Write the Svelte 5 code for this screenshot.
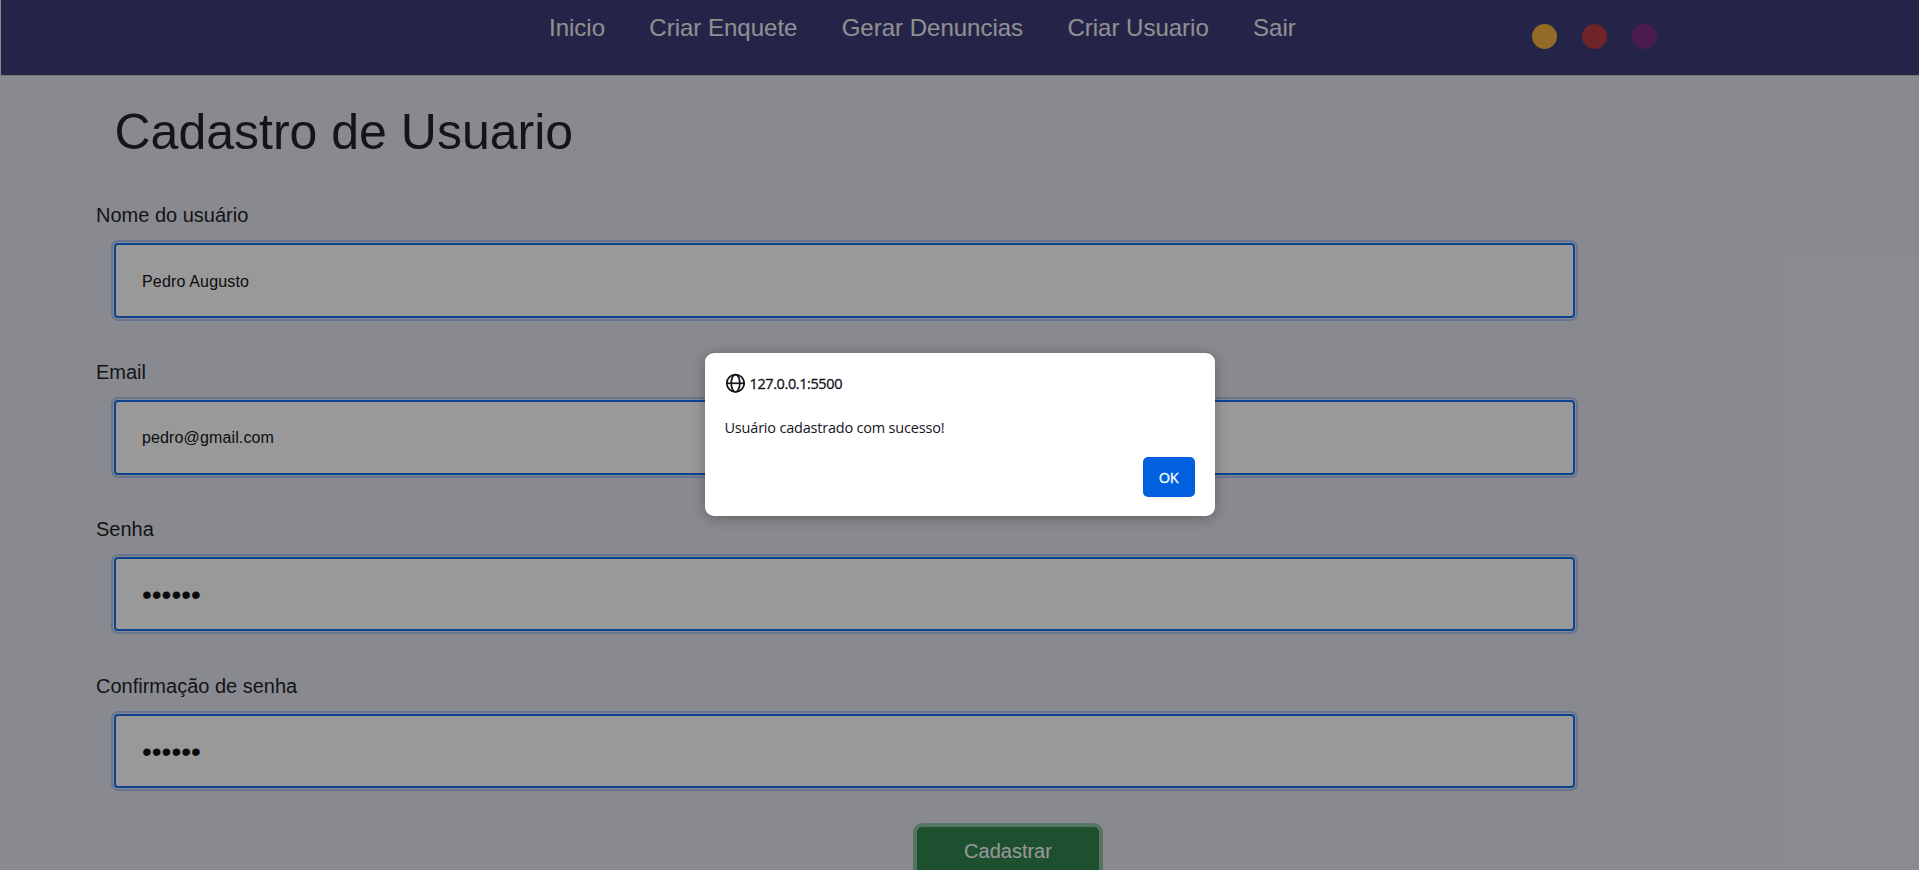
<script>
  const links = ['Inicio', 'Criar Enquete', 'Gerar Denuncias', 'Criar Usuario', 'Sair'];
  const themes = ['amber', 'red', 'purple'];
  const fields = [
    { label: 'Nome do usuário', value: 'Pedro Augusto', kind: 'name' },
    { label: 'Email', value: 'pedro@gmail.com', kind: 'email' },
    { label: 'Senha', value: '••••••', kind: 'secret' },
    { label: 'Confirmação de senha', value: '••••••', kind: 'secret' }
  ];
</script>

<div class="page">
  <header>
    <nav>
      {#each links as link}
        <span>{link}</span>
      {/each}
    </nav>
    <div class="themes">
      {#each themes as theme}
        <i class={theme}></i>
      {/each}
    </div>
  </header>

  <main>
    <h1>Cadastro de Usuario</h1>
    {#each fields as field}
      <div class="field">
        <div class="label">{field.label}</div>
        <div class="box {field.kind}"><span>{field.value}</span></div>
      </div>
    {/each}
    <button class="submit">Cadastrar</button>
  </main>

  <div class="overlay">
    <section class="dialog">
      <div class="origin">
        <svg viewBox="0 0 20 20" width="20" height="20" fill="none" stroke="#15141a" stroke-width="1.7">
          <circle cx="10.5" cy="10.3" r="8.7" />
          <ellipse cx="10.5" cy="10.3" rx="4.3" ry="8.7" />
          <path d="M1.8 10.3H19.2" />
        </svg>
        <span>127.0.0.1:5500</span>
      </div>
      <p><span>Usuário cadastrado com sucesso!</span></p>
      <button class="ok">OK</button>
    </section>
  </div>
</div>

<style>
  :global(body) {
    margin: 0;
    overflow: hidden;
  }
  .page {
    position: relative;
    height: 870px;
    overflow: hidden;
    background: #e5e7ee;
    color: #222428;
    font-family: 'Liberation Sans', Arial, sans-serif;
  }
  header {
    box-sizing: border-box;
    display: flex;
    height: 76px;
    margin-left: 1px;
    background: #3d3c7b;
    border-bottom: 1px solid #ccc8d2;
  }
  nav {
    display: flex;
    gap: 44.3px;
    width: 983px;
    padding: 14px 0 0 548px;
    color: #f0f0f0;
    font-size: 24px;
    line-height: 28px;
    white-space: nowrap;
  }
  .themes {
    display: flex;
    gap: 25px;
    padding-top: 24px;
  }
  .themes i {
    width: 25px;
    height: 25px;
    border-radius: 50%;
  }
  .amber { background: #f5b342; }
  .red { background: #b93c41; }
  .purple { background: #7d3080; }
  main {
    display: flex;
    flex-direction: column;
    padding: 26px 0 0 96px;
  }
  h1 {
    margin: 0 0 39px 18.5px;
    font-size: 50px;
    font-weight: 400;
    line-height: 60px;
  }
  .field {
    height: 157px;
  }
  .label {
    height: 42px;
    font-size: 20px;
    line-height: 28px;
  }
  .box {
    box-sizing: border-box;
    display: flex;
    align-items: center;
    width: 1461px;
    height: 75px;
    margin-left: 18px;
    padding: 1px 0 0 26px;
    background: #fff;
    border: 2px solid #1470ee;
    border-radius: 4px;
    box-shadow: 0 0 0 1px #e2e6f0, 0 0 0 3px #acc3ef;
    color: #151518;
    font-size: 16px;
    letter-spacing: 0.13px;
  }
  .name {
    padding-top: 3px;
    letter-spacing: 0.17px;
  }
  .secret {
    height: 74px;
    padding-top: 2px;
    font-size: 28px;
    line-height: 30px;
    letter-spacing: 0;
  }
  button {
    padding: 0;
    border: 0;
    font-family: inherit;
  }
  .submit {
    flex: none;
    width: 182px;
    height: 48px;
    margin: -2px 0 0 821px;
    background: #338650;
    border-radius: 5px;
    box-shadow: 0 0 0 4px #92c3a6;
    color: #fff;
    font-size: 20px;
  }
  .overlay {
    position: absolute;
    inset: 0;
    display: flex;
    justify-content: center;
    align-items: flex-start;
    padding-top: 353px;
    background: rgba(0, 0, 0, 0.4);
  }
  .dialog {
    box-sizing: border-box;
    display: flex;
    flex-direction: column;
    width: 510px;
    height: 163px;
    padding: 19px 20px;
    background: #fff;
    border-radius: 9px;
    box-shadow: 0 2px 14px rgba(0, 0, 0, 0.3);
    color: #15141a;
    font-family: 'Open Sans', 'Noto Sans', sans-serif;
    font-size: 14.5px;
  }
  .origin {
    display: flex;
    align-items: center;
    gap: 5px;
    height: 22px;
    letter-spacing: -0.4px;
    -webkit-text-stroke: 0.3px #15141a;
  }
  .dialog p {
    margin: 22px 0 0;
    line-height: 24px;
    letter-spacing: -0.2px;
  }
  .ok {
    align-self: flex-end;
    width: 52px;
    height: 40px;
    margin-top: 17px;
    background: #0060df;
    border-radius: 5px;
    color: #fff;
    font-size: 14.5px;
    letter-spacing: -0.4px;
    -webkit-text-stroke: 0.3px #fff;
  }
</style>
